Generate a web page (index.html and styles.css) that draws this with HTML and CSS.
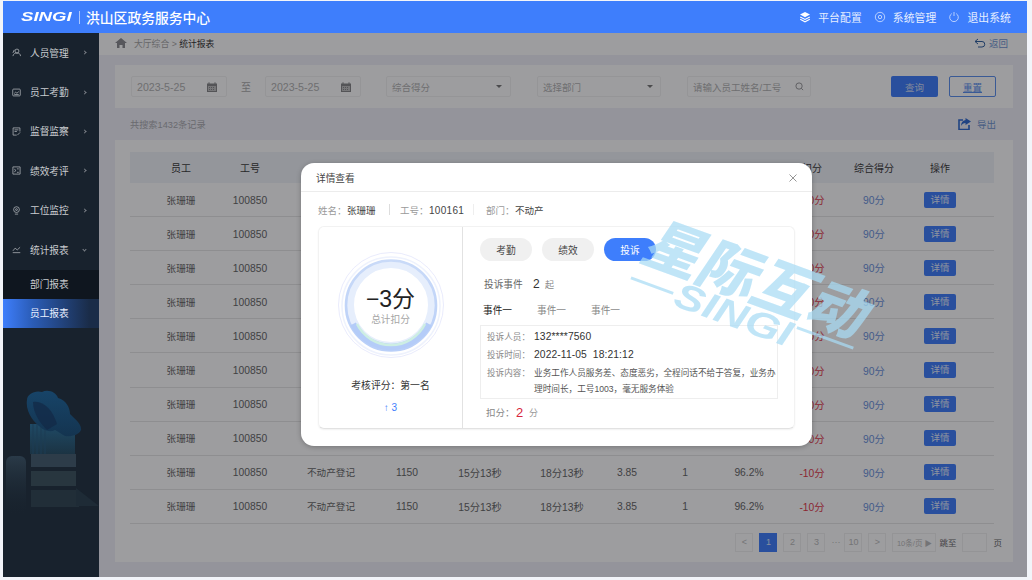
FILE: index.html
```html
<!DOCTYPE html>
<html lang="zh-CN">
<head>
<meta charset="utf-8">
<title>统计报表</title>
<link rel="stylesheet" href="styles.css">
</head>
<body>
<div class="app">
  <header class="topbar">
    <div class="brand"><span class="logo">SINGI</span><span class="brand-sep"></span><span class="brand-title">洪山区政务服务中心</span></div>
    <nav class="top-nav">
      <a class="top-link"><svg class="ti" viewBox="0 0 12 12"><path d="M6 1 11 3.600 6 6.200 1 3.600Z" fill="#fff"/><path d="M1.200 6 6 8.400 10.800 6M1.200 8.200 6 10.800 10.800 8.200" fill="none" stroke="#fff" stroke-width="1.100"/></svg>平台配置</a>
      <a class="top-link"><svg class="ti" viewBox="0 0 12 12"><circle cx="6" cy="6" r="4.700" fill="none" stroke="#d5e3ff" stroke-width=".8"/><circle cx="6" cy="6" r="1.700" fill="none" stroke="#d5e3ff" stroke-width=".8"/></svg>系统管理</a>
      <a class="top-link"><svg class="ti" viewBox="0 0 12 12"><path d="M3.800 2.600a4.300 4.300 0 1 0 4.400 0M6 1v4" fill="none" stroke="#d5e3ff" stroke-width=".8"/></svg>退出系统</a>
    </nav>
  </header>
  <div class="body">
    <aside class="sidebar">
      <ul class="menu">
        <li class="menu-item"><svg class="mi" viewBox="0 0 10 10"><circle cx="5.500" cy="3.400" r="2.200"/><path d="M1 9c.6-2.500 2-3.400 4.500-3.400S9.200 6.500 9.500 9M1 5.500 2.500 2"/></svg><span>人员管理</span><i class="chev"></i></li>
        <li class="menu-item"><svg class="mi" viewBox="0 0 10 10"><rect x=".8" y="1.200" width="8.400" height="7.600" rx="1"/><path d="M2.500 6 4 4.700 5.500 5.800 7.500 4M2.500 7.300h5"/></svg><span>员工考勤</span><i class="chev"></i></li>
        <li class="menu-item"><svg class="mi" viewBox="0 0 10 10"><path d="M8.800 5V1H1.200v8h4M2.800 3.200h4.400M2.800 5h2.600M6 9l3-3"/></svg><span>监督监察</span><i class="chev"></i></li>
        <li class="menu-item"><svg class="mi" viewBox="0 0 10 10"><path d="M1 1h8v8H1zM2.500 3.500 4.500 5 2.500 6.500M5.500 3.200h2M5.500 7h2"/></svg><span>绩效考评</span><i class="chev"></i></li>
        <li class="menu-item"><svg class="mi" viewBox="0 0 10 10"><circle cx="5" cy="4" r="3.200"/><circle cx="5" cy="4" r="1"/><path d="M3.200 9h3.600"/></svg><span>工位监控</span><i class="chev"></i></li>
        <li class="menu-item"><svg class="mi" viewBox="0 0 10 10"><path d="M.8 8.500h8.400M1 6.500 3.500 3.500 5.800 5.500 9 2.500"/></svg><span>统计报表</span><i class="chev chev-down"></i></li>
      </ul>
      <ul class="submenu">
        <li class="sub-item">部门报表</li>
        <li class="sub-item sub-active">员工报表</li>
      </ul>
      <svg class="decor" viewBox="0 0 96 124">
        <defs>
          <linearGradient id="fadeB" x1="0" y1="0" x2="0" y2="1"><stop offset="0" stop-color="#2a3a48"/><stop offset="1" stop-color="#1a2631" stop-opacity="0"/></linearGradient>
          <linearGradient id="tower" x1="0" y1="0" x2="0" y2="1"><stop offset="0" stop-color="#1f4a66"/><stop offset="1" stop-color="#1b3343"/></linearGradient>
          <linearGradient id="cloud" x1="0" y1="0" x2="0" y2="1"><stop offset="0" stop-color="#174468"/><stop offset="1" stop-color="#143450"/></linearGradient>
        </defs>
        <rect x="27" y="34" width="45" height="30" fill="url(#tower)"/>
        <path d="M30 34v30M34 34v30M38 34v30M42 34v30" stroke="#1c3d55" stroke-width="1"/>
        <path d="M24 10c0-6 8-10 15-8 6-3 14 0 16 6 8 2 12 10 12 16 4 4 12 10 11 16-2 5-10 7-16 6-4-2-6-4-10-6-5 3-12 0-16-4-4-3-14-14-12-26Z" fill="url(#cloud)"/>
        <path d="M30 12c10-2 20 8 24 22l-10 6c-6-6-14-16-14-28Z" fill="#132a47" opacity=".75"/>
        <rect x="3" y="66" width="20" height="58" rx="6" fill="url(#fadeB)"/>
        <rect x="28" y="64" width="45" height="13" fill="#2d3c49"/>
        <rect x="28" y="81" width="45" height="15" fill="#28363f"/>
        <rect x="28" y="100" width="48" height="17" fill="#212e38"/>
        <path d="M73 98 96 116H73Z" fill="#1e2b36"/>
      </svg>
    </aside>
    <main class="main">
      <div class="crumbs">
        <div class="crumb-left"><svg class="home" viewBox="0 0 12 10"><path d="M6 0 12 5H10V10H7.500V7H4.500V10H2V5H0Z" fill="#8a8b90"/></svg><span class="crumb-muted">大厅综合 &gt;&nbsp;</span><span class="crumb-now">统计报表</span></div>
        <a class="back"><svg class="back-ic" viewBox="0 0 12 10"><path d="M4 1 1 3.500 4 6M1 3.500h7a2.700 2.700 0 0 1 0 5.500H4" fill="none" stroke="#2f5f9f" stroke-width="1"/></svg>返回</a>
      </div>
      <section class="panel filters">
        <div class="field f-date"><span>2023-5-25</span><svg class="cal" viewBox="0 0 10 10"><path d="M0 1.500h10V10H0Z" fill="#858688"/><path d="M1 4h8v5H1Z" fill="#c0c0c0"/><path d="M2 .3v2M8 .3v2" stroke="#858688"/><path d="M2 5.500h6M2 7.500h6" stroke="#858688" stroke-dasharray="1 1"/></svg></div>
        <span class="to">至</span>
        <div class="field f-date"><span>2023-5-25</span><svg class="cal" viewBox="0 0 10 10"><path d="M0 1.500h10V10H0Z" fill="#858688"/><path d="M1 4h8v5H1Z" fill="#c0c0c0"/><path d="M2 .3v2M8 .3v2" stroke="#858688"/><path d="M2 5.500h6M2 7.500h6" stroke="#858688" stroke-dasharray="1 1"/></svg></div>
        <div class="field f-sel f-sel1"><span>综合得分</span><i class="caret"></i></div>
        <div class="field f-sel f-sel2"><span>选择部门</span><i class="caret"></i></div>
        <div class="field f-search"><span>请输入员工姓名/工号</span><svg class="search" viewBox="0 0 10 10"><circle cx="4.500" cy="4.500" r="3.500" fill="none" stroke="#909092"/><path d="M7 7l2 2" stroke="#909092"/></svg></div>
        <button class="btn btn-primary">查询</button>
        <button class="btn btn-ghost">重置</button>
      </section>
      <div class="summary">
        <span>共搜索1432条记录</span>
        <a class="export"><svg class="export-ic" viewBox="0 0 13 12"><path d="M5 2H1v9.500h10V7" fill="none" stroke="#2f6ad0" stroke-width="1.600"/><path d="M7.500 0 13 3.500 7.500 7V5C5.500 5 4 6 3 8 3 5 4.500 2.500 7.500 2Z" fill="#2f6ad0"/></svg>导出</a>
      </div>
      <section class="panel table-panel">
        <div class="row head"><span>员工</span><span>工号</span><span></span><span></span><span></span><span></span><span></span><span></span><span></span><span>扣分</span><span>综合得分</span><span>操作</span></div>
        <div class="row"><span class="cn">张珊珊</span><span class="n">100850</span><span></span><span></span><span></span><span></span><span></span><span></span><span></span><span class="neg">-10分</span><span class="pos">90分</span><span><button class="detail">详情</button></span></div>
        <div class="row"><span class="cn">张珊珊</span><span class="n">100850</span><span></span><span></span><span></span><span></span><span></span><span></span><span></span><span class="neg">-10分</span><span class="pos">90分</span><span><button class="detail">详情</button></span></div>
        <div class="row"><span class="cn">张珊珊</span><span class="n">100850</span><span></span><span></span><span></span><span></span><span></span><span></span><span></span><span class="neg">-10分</span><span class="pos">90分</span><span><button class="detail">详情</button></span></div>
        <div class="row"><span class="cn">张珊珊</span><span class="n">100850</span><span></span><span></span><span></span><span></span><span></span><span></span><span></span><span class="neg">-10分</span><span class="pos">90分</span><span><button class="detail">详情</button></span></div>
        <div class="row"><span class="cn">张珊珊</span><span class="n">100850</span><span></span><span></span><span></span><span></span><span></span><span></span><span></span><span class="neg">-10分</span><span class="pos">90分</span><span><button class="detail">详情</button></span></div>
        <div class="row"><span class="cn">张珊珊</span><span class="n">100850</span><span></span><span></span><span></span><span></span><span></span><span></span><span></span><span class="neg">-10分</span><span class="pos">90分</span><span><button class="detail">详情</button></span></div>
        <div class="row"><span class="cn">张珊珊</span><span class="n">100850</span><span></span><span></span><span></span><span></span><span></span><span></span><span></span><span class="neg">-10分</span><span class="pos">90分</span><span><button class="detail">详情</button></span></div>
        <div class="row"><span class="cn">张珊珊</span><span class="n">100850</span><span></span><span></span><span></span><span></span><span></span><span></span><span></span><span class="neg">-10分</span><span class="pos">90分</span><span><button class="detail">详情</button></span></div>
        <div class="row"><span class="cn">张珊珊</span><span class="n">100850</span><span class="cn">不动产登记</span><span class="n">1150</span><span class="n">15分13秒</span><span class="n">18分13秒</span><span class="n">3.85</span><span class="n">1</span><span class="n">96.2%</span><span class="neg">-10分</span><span class="pos">90分</span><span><button class="detail">详情</button></span></div>
        <div class="row"><span class="cn">张珊珊</span><span class="n">100850</span><span class="cn">不动产登记</span><span class="n">1150</span><span class="n">15分13秒</span><span class="n">18分13秒</span><span class="n">3.85</span><span class="n">1</span><span class="n">96.2%</span><span class="neg">-10分</span><span class="pos">90分</span><span><button class="detail">详情</button></span></div>
        <div class="pager">
          <span class="pg">&lt;</span><span class="pg pg-on">1</span><span class="pg">2</span><span class="pg">3</span><span class="pg-dots">···</span><span class="pg">10</span><span class="pg">&gt;</span><span class="pg pg-size">10条/页 ▶</span><span class="pg-label">跳至</span><span class="pg-input"></span><span class="pg-label">页</span>
        </div>
      </section>
      <div class="overlay">
        <div class="modal">
          <div class="modal-head"><span>详情查看</span><svg class="close" viewBox="0 0 8 8"><path d="M.5.5l7 7M7.500.5l-7 7" stroke="#8a8a8a" stroke-width=".9"/></svg></div>
          <div class="info">
            <span class="label">姓名&#xFF1A;</span><span class="val val-name">张珊珊</span><i class="info-sep"></i>
            <span class="label">工号&#xFF1A;</span><span class="val val-id">100161</span><i class="info-sep"></i>
            <span class="label">部门&#xFF1A;</span><span class="val">不动产</span>
          </div>
          <div class="card">
            <div class="card-left">
              <div class="gauge">
                <svg class="gauge-svg" viewBox="0 0 110 110">
                  <defs>
                    <linearGradient id="ringA" x1="0" y1="0" x2="0" y2="1"><stop offset="0" stop-color="#c9daf8"/><stop offset="1" stop-color="#b9cff8"/></linearGradient>
                    <filter id="soft" x="-10%" y="-10%" width="120%" height="120%"><feGaussianBlur stdDeviation=".7"/></filter>
                  </defs>
                  <circle cx="55" cy="55" r="52.500" fill="none" stroke="#e3e6fb" stroke-width=".8"/>
                  <circle cx="55" cy="56" r="49" fill="none" stroke="#eef2fd" stroke-width="1.500"/>
                  <g filter="url(#soft)">
                    <circle cx="55" cy="55" r="41" fill="none" stroke="#e6eefc" stroke-width="8"/>
                    <circle cx="55" cy="55.500" r="45" fill="none" stroke="url(#ringA)" stroke-width="2.600"/>
                    <path d="M17 74A43 43 0 0 0 93 74" fill="none" stroke="#b4ccf8" stroke-width="6.500"/>
                    <path d="M21 74A38 38 0 0 0 89 74" fill="none" stroke="#cdeee3" stroke-width="2.500"/>
                  </g>
                  <circle cx="55" cy="55" r="35.500" fill="#fff"/>
                </svg>
                <div class="gauge-text"><span class="gauge-num">−3分</span><span class="gauge-sub">总计扣分</span></div>
              </div>
              <div class="rank">考核评分&#xFF1A;第一名</div>
              <div class="rank-up">↑ 3</div>
            </div>
            <div class="card-right">
              <div class="pills"><span class="pill">考勤</span><span class="pill">绩效</span><span class="pill pill-on">投诉</span></div>
              <div class="count"><span class="count-label">投诉事件</span><span class="count-num">2</span><span class="count-unit">起</span></div>
              <div class="tabs"><span class="tab tab-on">事件一</span><span class="tab">事件一</span><span class="tab">事件一</span></div>
              <div class="detail-box">
                <div class="d-row"><span class="d-k">投诉人员&#xFF1A;</span><span class="d-v">132****7560</span></div>
                <div class="d-row"><span class="d-k">投诉时间&#xFF1A;</span><span class="d-v">2022-11-05&nbsp; 18:21:12</span></div>
                <div class="d-row d-multi"><span class="d-k">投诉内容&#xFF1A;</span><span class="d-text">业务工作人员服务差、态度恶劣&#xFF0C;全程问话不给于答复&#xFF0C;业务办理时间长&#xFF0C;工号1003&#xFF0C;毫无服务体验</span></div>
              </div>
              <div class="deduct"><span class="d-lab">扣分&#xFF1A;</span><span class="d-num">2</span><span class="d-unit">分</span></div>
            </div>
          </div>
        </div>
      </div>
    </main>
  </div>
  <div class="watermark"><div class="wm-cn">星际互动</div><div class="wm-en"><i class="wm-line wm-line-l"></i><span>SINGI</span><i class="wm-line wm-line-r"></i></div></div>
</div>
</body>
</html>
```
FILE: styles.css
```css
* { box-sizing: border-box; margin: 0; padding: 0; }
html, body { height: 100%; }
body {
  background: #f2f4f9;
  font-family: "Liberation Sans", "Noto Sans CJK SC", sans-serif;
  font-size: 10px;
  color: #333;
  padding: 1px 5px 3px 3px;
  overflow: hidden;
}
ul { list-style: none; }
button { font: inherit; border: 0; }
.app { width: 1024px; height: 576px; display: flex; flex-direction: column; position: relative; overflow: hidden; }

.topbar { height: 32px; flex: none; background: #3e7efc; color: #fff; display: flex; align-items: center; justify-content: space-between; padding: 0 16px 0 18px; }
.brand { display: flex; align-items: center; }
.logo { font-weight: 700; font-style: italic; font-size: 12px; transform: scaleX(1.55); transform-origin: left center; width: 58px; }
.brand-sep { width: 1px; height: 13px; background: #a9c6ff; margin-right: 6px; }
.brand-title { font-size: 13.800px; font-weight: 500; }
.top-nav { display: flex; gap: 12px; }
.top-link { display: flex; align-items: center; font-size: 10.800px; color: #e6eeff; letter-spacing: .1px; }
.ti { width: 12px; height: 12px; margin-right: 7px; }

.body { flex: 1; display: flex; min-height: 0; }
.sidebar { width: 96px; flex: none; background: #18222d; color: #d3d6da; display: flex; flex-direction: column; }
.menu { padding-bottom: .6px; }
.menu-item { height: 39.400px; display: flex; align-items: center; padding: 0 0 0 9px; font-size: 9.700px; color: #c9ccd0; }
.mi { width: 9px; height: 9px; margin-right: 9px; fill: none; stroke: #b9bdc2; stroke-width: .8; flex: none; }
.chev { width: 3px; height: 3px; border-top: 1px solid #7b8188; border-right: 1px solid #7b8188; transform: rotate(45deg); margin-left: 14px; }
.chev-down { transform: rotate(135deg); }
.submenu { background: #0f161f; }
.sub-item { height: 29px; display: flex; align-items: center; padding-left: 27px; font-size: 9.700px; color: #c9ccd0; }
.sub-active { background: linear-gradient(90deg, #3e7efc 0%, #2b5db8 30%, #1a2c48 90%); color: #eaf0ff; }
.decor { width: 96px; height: 124px; margin-top: 62px; }

.main { flex: 1; min-width: 0; background: #f0f1f8; position: relative; }
.crumbs { height: 22px; background: #fff; display: flex; align-items: center; justify-content: space-between; padding: 0 19px 2px 16px; font-size: 8.800px; }
.crumb-left { display: flex; align-items: center; }
.home { width: 12px; height: 10px; margin-right: 7px; }
.crumb-muted { color: #a5a5a5; }
.crumb-now { color: #333; }
.back { display: flex; align-items: center; font-size: 9.500px; color: #6f95d2; }
.back-ic { width: 12px; height: 10px; margin-right: 3px; }
.panel { background: #fff; margin: 0 14px 0 16px; }
.filters { height: 43px; margin-top: 10px; display: flex; align-items: center; padding: 0 15px 0 16px; }
.field { height: 21px; border: 1px solid #f2f2f2; display: flex; align-items: center; justify-content: space-between; color: #b2b2b2; font-size: 9.500px; padding: 0 3px 0 5px; flex: none; border-radius: 2px; }
.f-date { width: 96px; padding-right: 9px; font-size: 10.600px; }
.to { width: 38px; text-align: center; color: #aaa; flex: none; }
.f-sel1 { width: 125px; margin-left: 25px; padding-right: 8px; }
.f-sel2 { width: 124px; margin-left: 26px; padding-right: 7px; }
.f-search { width: 124px; margin-left: 26px; padding-right: 6px; }
.cal { width: 10px; height: 10px; }
.search { width: 9px; height: 9px; }
.caret { width: 0; height: 0; border-left: 3px solid transparent; border-right: 3px solid transparent; border-top: 3.500px solid #777; }
.btn { width: 47px; height: 21px; border-radius: 2px; font-size: 9.500px; flex: none; }
.btn-primary { background: #3e7efc; color: #cfdcf8; margin-left: 80px; }
.btn-ghost { background: #fff; color: #5a8fef; border: 1px solid #5a8fef; margin-left: 11px; text-decoration: underline; }
.summary { height: 32px; display: flex; align-items: center; justify-content: space-between; padding: 0 31px; color: #ababb0; font-size: 9.200px; }
.export { display: flex; align-items: center; font-size: 9.500px; color: #6f95d2; }
.export-ic { width: 13px; height: 12px; margin-right: 6px; }

.table-panel { height: 422px; padding: 12px 0 0 0; }
.row { display: grid; grid-template-columns: 80px 58px 104px 48px 98px 66px 64px 52px 76px 50px 74px 58px; margin: 0 19px 0 15px; padding-left: 11px; height: 34.100px; align-items: center; border-bottom: 1px solid #e6e6e6; color: #666; font-size: 10.300px; }
.row > span { display: flex; justify-content: center; white-space: nowrap; }
.row > .n { padding-top: 1px; }
.row > .cn { font-size: 9.600px; }
.head { height: 31px; background: #f1f3f9; border-bottom: 0; color: #3a3a3a; font-size: 10px; }
.neg { color: #e2394a; }
.pos { color: #6a92dc; }
.detail { width: 32px; height: 16px; background: #3e7efc; color: #e8efff; border-radius: 2px; font-size: 9.500px; line-height: 16px; }
.pager { display: flex; align-items: center; justify-content: flex-end; margin: 9px 11px 0 0; color: #bbb; font-size: 9px; }
.pg { min-width: 18px; height: 19px; padding: 0 2px; margin-right: 6px; border: 1px solid #f1f1f1; display: flex; align-items: center; justify-content: center; background: #fff; }
.pg-on { background: #3e7efc; border-color: #3e7efc; color: #dbe6ff; }
.pg-dots { width: 7px; margin-right: 6px; white-space: nowrap; }
.pg-size { width: 44px; margin-right: 3px; font-size: 7.500px; white-space: nowrap; }
.pg-label { color: #666; font-size: 8.500px; }
.pg-input { width: 25px; height: 19px; border: 1px solid #f1f1f1; margin: 0 6px; }

.overlay { position: absolute; inset: 0; background: rgba(10, 10, 16, .4); padding: 130px 0 0 202px; }
.modal { width: 511px; height: 283px; background: #fff; border-radius: 13px; box-shadow: 0 1px 5px rgba(0,0,0,.25); }
.modal-head { height: 29px; padding: 1px 15px 0 15px; display: flex; align-items: center; justify-content: space-between; border-bottom: 1px solid #ececec; font-size: 9.700px; color: #444; }
.close { width: 8px; height: 8px; }
.info { height: 35px; padding-left: 17px; display: flex; align-items: center; font-size: 9.500px; }
.label { color: #9a9a9a; width: 29px; white-space: nowrap; }
.val { color: #444; }
.val-name { width: 42px; }
.val-id { width: 44px; font-size: 10px; letter-spacing: .3px; padding-top: 1px; }
.info-sep { width: 1px; height: 11px; background: #ddd; margin-right: 10px; }
.val-id + .info-sep { background: #eee; margin-right: 12px; }
.card { width: 477px; height: 203px; margin: -1px 0 0 17px; display: flex; border: 1px solid #f2f2f2; border-bottom-color: #e2e2e2; border-radius: 6px; box-shadow: 0 1px 2px rgba(0,0,0,.06); }
.card-left { width: 144px; flex: none; border-right: 1px solid #e2e2e2; display: flex; flex-direction: column; align-items: center; padding: 23px 0 0 0; }
.gauge { width: 110px; height: 110px; position: relative; flex: none; }
.gauge-svg { width: 110px; height: 110px; display: block; }
.gauge-text { position: absolute; inset: 0; display: flex; flex-direction: column; align-items: center; justify-content: center; }
.gauge-num { font-size: 23px; line-height: 28px; color: #222; margin-top: 2px; }
.gauge-sub { font-size: 9.700px; color: #a5a5a5; line-height: 14px; }
.rank { margin-top: 18px; font-size: 9.800px; color: #333; }
.rank-up { margin-top: 10px; color: #3e7efc; font-size: 10px; }
.card-right { flex: 1; padding: 11px 0 0 17px; min-width: 0; }
.pills { display: flex; gap: 10px; }
.pill { width: 52px; height: 23px; border-radius: 12px; background: #f0f0f0; color: #444; font-size: 9.700px; display: flex; align-items: center; justify-content: center; }
.pill-on { background: #3e7efc; color: #fff; }
.count { margin-top: 15px; height: 16px; display: flex; align-items: center; font-size: 9.700px; color: #666; padding-left: 4px; }
.count-label { width: 49px; }
.count-num { width: 12px; font-size: 12px; color: #333; }
.count-unit { color: #888; font-size: 9px; }
.tabs { margin-top: 11px; height: 16px; display: flex; font-size: 9.700px; color: #888; padding-left: 3px; }
.tab { width: 54px; }
.tab-on { color: #222; }
.detail-box { width: 298px; height: 74px; margin-top: 6px; border: 1px solid #eeeeee; padding: 1px 0 0 6px; }
.d-row { display: flex; height: 18px; align-items: center; }
.d-k { width: 47px; flex: none; color: #888; font-size: 8.600px; white-space: nowrap; }
.d-v { color: #333; font-size: 10.300px; letter-spacing: .1px; }
.d-multi { height: auto; align-items: flex-start; padding-top: 2px; }
.d-multi .d-k { line-height: 16px; }
.d-text { font-size: 8.650px; line-height: 16px; color: #555; width: 244px; }
.deduct { margin-top: 4px; height: 18px; display: flex; align-items: center; padding-left: 6px; color: #888; font-size: 9.500px; }
.d-lab { width: 30px; white-space: nowrap; }
.d-num { width: 13px; color: #d8263c; font-size: 13px; font-weight: 500; }
.d-unit { font-size: 9px; color: #999; }

.watermark { position: absolute; left: 637px; top: 208px; width: 270px; transform: rotate(20deg); transform-origin: left center; color: #a9dcf5; opacity: .72; pointer-events: none; }
.wm-cn { font-size: 58px; line-height: 60px; font-weight: 900; font-style: italic; white-space: nowrap; }
.wm-en { display: flex; align-items: center; gap: 2px; margin: -8px 0 0 0; font-size: 36px; line-height: 36px; font-weight: 700; font-style: italic; white-space: nowrap; }
.wm-en span { transform: scaleX(1.25); margin: 0 13px; }
.wm-line { height: 3px; background: #a9dcf5; flex: none; }
.wm-line-l { width: 45px; }
.wm-line-r { width: 60px; transform: translateY(-10px); }
```
